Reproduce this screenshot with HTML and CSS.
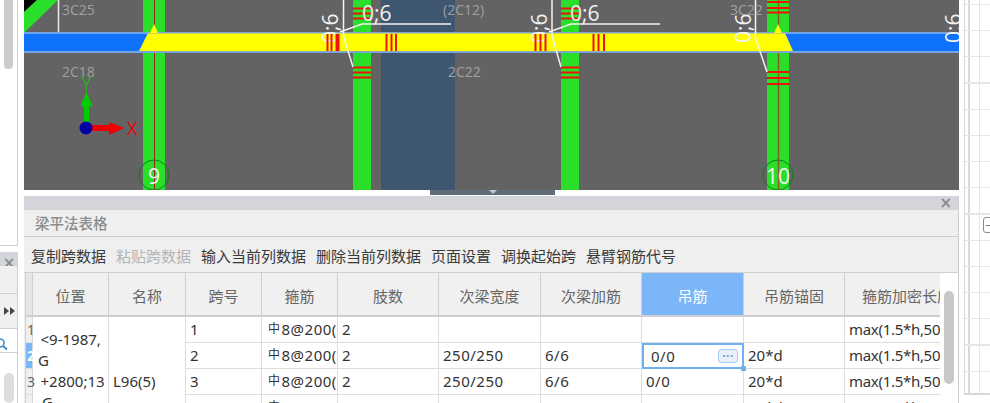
FILE: index.html
```html
<!DOCTYPE html>
<html lang="zh">
<head>
  <meta charset="UTF-8">
  <title>梁平法表格</title>
  <link rel="stylesheet" href="styles.css">
</head>
<body>
  <div class="side">
    <div class="side-top"><div class="side-thumb"></div></div>
    <div class="side-head"><span class="close">×</span></div>
    <div class="side-band"></div>
    <div class="side-band side-arrows">
      <svg width="11" height="8" viewBox="0 0 11 8"><path d="M0 0L5 4L0 8ZM6 0L11 4L6 8Z" fill="#444"/></svg>
    </div>
    <div class="side-search">
      <svg width="8" height="14" viewBox="0 0 8 14"><circle cx="0" cy="6" r="4" fill="none" stroke="#3b8ed0" stroke-width="1.6"/><path d="M3 9l4 3.5" stroke="#3b8ed0" stroke-width="2"/></svg>
    </div>
    <div class="side-list"><div class="side-thumb2"></div></div>
  </div>

  <div class="main">
    <svg class="view" width="935" height="190" viewBox="24 0 935 190">
      <rect x="24" y="0" width="935" height="190" fill="#636363"/>
      <rect x="381" y="0" width="74" height="190" fill="#3e5670"/>
      <path d="M24 0H37L24 12Z" fill="#000"/>
      <path d="M24 12L37 0H58L24 33Z" fill="#2adf2a"/>
      <path d="M58.500 0V32" stroke="#eee" stroke-width="1.500"/>

      <rect x="143" y="0" width="22" height="190" fill="#2adf2a"/>
      <rect x="353" y="0" width="18" height="190" fill="#2adf2a"/>
      <rect x="561" y="0" width="18" height="190" fill="#2adf2a"/>
      <rect x="767" y="0" width="22" height="190" fill="#2adf2a"/>
      <path d="M154.500 0V190" stroke="#96201a"/>
      <path d="M778.500 0V190" stroke="#8f5a22" stroke-width="1.500"/>

      <!-- stirrup ticks on the columns -->
      <path d="M353 8.500H371M353 13.500H371M353 18.500H371M353 67.500H371M353 72.500H371M353 77.500H371" stroke="#f01010" stroke-width="2"/>
      <path d="M561 8.500H579M561 13.500H579M561 18.500H579M561 67.500H579M561 72.500H579M561 77.500H579" stroke="#f01010" stroke-width="2"/>
      <path d="M767 2H789M767 8H789M767 12.500H789M767 72H789M767 78H789M767 84H789" stroke="#f01010" stroke-width="2"/>

      <!-- beam -->
      <rect x="24" y="33" width="935" height="19" fill="#0f72fb"/>
      <path d="M24 33H959M24 52H959" stroke="#72a4e4" stroke-width="2"/>
      <path d="M148 33H785L793 51H139Z" fill="#ff0"/>
      <path d="M148 33H785M154 51.500H785" stroke="#8fa8b8"/>
      <path d="M154 24L158 33H150Z" fill="#ff0"/>
      <path d="M778 24L782 33H774Z" fill="#ff0"/>

      <text class="v-mark" x="362" y="21">0;6</text>
      <text class="v-mark" x="570" y="21">0;6</text>
      <text class="v-mark" transform="translate(338 43) rotate(-90)">0;6</text>
      <text class="v-mark" transform="translate(547 43) rotate(-90)">0;6</text>
      <text class="v-mark" transform="translate(751 43) rotate(-90)">0;6</text>
      <text class="v-mark" transform="translate(961 43) rotate(-90)">0;6</text>

      <path d="M327.500 34V51M331.500 34V51M336.500 34V51M338.500 34V51M386.500 34V51M391.500 34V51M396 34V51M535.500 34V51M540.500 34V51M545.500 34V51M593.500 34V51M598.500 34V51M604 34V51" stroke="#f01010" stroke-width="2"/>

      <!-- leaders -->
      <g fill="none" stroke="#f4f4f4" stroke-width="1.500">
        <path d="M343.500 0V36L353 67"/>
        <path d="M340 32L362 24H451"/>
        <path d="M552 0V36L561 67"/>
        <path d="M549 32L571 24H660"/>
        <path d="M755.500 0V38L767 72"/>
      </g>

      <text class="v-grid" x="62" y="15">3C25</text>
      <text class="v-grid" x="62" y="77">2C18</text>
      <text class="v-grid" x="443" y="15">(2C12)</text>
      <text class="v-grid" x="448" y="77">2C22</text>
      <text class="v-grid" x="730" y="15">3C22</text>

      <!-- axis gizmo -->
      <rect x="84" y="104" width="5" height="22" fill="#0c0"/>
      <path d="M86.500 92L92.500 106H80.500Z" fill="#0c0"/>
      <text class="v-axis-y" x="86.500" y="91">Y</text>
      <rect x="92" y="125" width="20" height="6" fill="#f00000"/>
      <path d="M109 122L124 128L109 135Z" fill="#f00000"/>
      <circle cx="86" cy="128" r="6.500" fill="#0000a4"/>
      <text class="v-axis-x" x="127" y="135">X</text>

      <!-- axis bubbles -->
      <circle cx="154" cy="175" r="15" fill="none" stroke="#0d7d1c"/>
      <text class="v-bubble" x="154" y="184">9</text>
      <circle cx="778" cy="175" r="15" fill="none" stroke="#0d7d1c"/>
      <text class="v-bubble" x="778" y="184">10</text>
    </svg>

    <div class="splitter"><div class="grip"><span class="grip-arrow"></span></div></div>

    <div class="panel">
      <div class="panel-bar"><span class="close">×</span></div>
      <div class="panel-title">梁平法表格</div>
      <div class="toolbar">
        <span>复制跨数据</span>
        <span class="off">粘贴跨数据</span>
        <span>输入当前列数据</span>
        <span>删除当前列数据</span>
        <span>页面设置</span>
        <span>调换起始跨</span>
        <span>悬臂钢筋代号</span>
      </div>
      <div class="grid-wrap">
        <div class="grid-clip">
          <table class="grid">
            <colgroup>
              <col class="c-no"><col class="c-n"><col class="c-n2"><col class="c-n"><col class="c-n">
              <col class="c-w"><col class="c-w2"><col class="c-w"><col class="c-w2"><col class="c-w"><col class="c-last">
            </colgroup>
            <thead>
              <tr>
                <th class="corner"></th><th>位置</th><th>名称</th><th>跨号</th><th>箍筋</th><th>肢数</th>
                <th>次梁宽度</th><th>次梁加筋</th><th class="on">吊筋</th><th>吊筋锚固</th><th>箍筋加密长度</th>
              </tr>
            </thead>
            <tbody>
              <tr>
                <td class="no">1</td>
                <td rowspan="5" class="pos">&thinsp;&lt;9-1987,<br>G<br>&thinsp;+2800;13<br>&nbsp;G<br>&nbsp;</td>
                <td rowspan="5">L96(5)</td>
                <td>1</td><td class="rebar"><i>中</i>8@200(2)</td><td>2</td><td></td><td></td><td></td><td></td><td class="len">max(1.5*h,500)</td>
              </tr>
              <tr>
                <td class="no sel">2</td>
                <td>2</td><td class="rebar"><i>中</i>8@200(2)</td><td>2</td><td class="frac">250/250</td><td class="frac">6/6</td>
                <td class="edit frac">0/0<span class="more">···</span><span class="handle"></span></td>
                <td>20*d</td><td class="len">max(1.5*h,500)</td>
              </tr>
              <tr>
                <td class="no">3</td>
                <td>3</td><td class="rebar"><i>中</i>8@200(2)</td><td>2</td><td class="frac">250/250</td><td class="frac">6/6</td><td class="frac">0/0</td><td>20*d</td><td class="len">max(1.5*h,500)</td>
              </tr>
              <tr>
                <td class="no">4</td>
                <td>4</td><td class="rebar"><i>中</i>8@200(2)</td><td>2</td><td class="frac">250/250</td><td class="frac">6/6</td><td class="frac">0/0</td><td>20*d</td><td class="len">max(1.5*h,500)</td>
              </tr>
              <tr>
                <td class="no">5</td>
                <td>5</td><td class="rebar"><i>中</i>8@200(2)</td><td>2</td><td></td><td></td><td></td><td></td><td class="len">max(1.5*h,500)</td>
              </tr>
            </tbody>
          </table>
        </div>
        <div class="grid-scroll"><div class="grid-thumb"></div></div>
      </div>
    </div>
  </div>

  <div class="right">
    <div class="sheet"><span class="tree-box">−</span></div>
  </div>
</body>
</html>
```

FILE: styles.css
```css
html, body {
  margin: 0;
  height: 403px;
  overflow: hidden;
}

body {
  display: flex;
  background-color: #ffffff;
  font-family: "Noto Sans", "Noto Sans CJK SC", sans-serif;
  font-size: 15px;
  color: #333333;
}

.close {
  color: #8a8a8a;
  font-family: "DejaVu Sans", sans-serif;
  font-size: 15px;
  font-weight: bold;
  line-height: 14px;
}

/* left dock */
.side {
  width: 24px;
  flex: none;
  display: flex;
  flex-direction: column;
}

.side-top {
  width: 18px;
  height: 252px;
  box-sizing: border-box;
  margin-bottom: 6px;
  border-right: 1px solid #cfcfcf;
  border-bottom: 1px solid #cfcfcf;
}

.side-thumb {
  width: 9px;
  height: 69px;
  margin-left: 4px;
  background-color: #cccccc;
  border-radius: 0 0 4px 4px;
}

.side-head {
  width: 18px;
  height: 14px;
  background-color: #d3d5da;
  text-align: center;
}

.side-band {
  width: 18px;
  height: 29px;
  box-sizing: border-box;
  background-color: #f0f0f0;
  border-right: 1px solid #cfcfcf;
  border-bottom: 1px solid #d0d0d0;
}

.side-arrows {
  height: 35px;
  padding: 13px 0 0 4px;
}

.side-arrows svg {
  display: block;
}

.side-search {
  width: 18px;
  height: 24px;
  box-sizing: border-box;
  padding-top: 6px;
  border-right: 1px solid #cfcfcf;
  border-bottom: 1px solid #d0d0d0;
}

.side-list {
  width: 18px;
  flex: 1;
  box-sizing: border-box;
  padding-top: 20px;
  border-right: 1px solid #cfcfcf;
}

.side-thumb2 {
  width: 10px;
  height: 30px;
  margin-left: 4px;
  background-color: #dddddd;
  border-radius: 5px;
}

/* centre */
.main {
  width: 935px;
  flex: none;
  display: flex;
  flex-direction: column;
}

.view {
  display: block;
  flex: none;
}

.v-mark {
  fill: #f2f2f2;
  font-family: "Open Sans", sans-serif;
  font-size: 21px;
}

.v-grid {
  fill: #a0a0a0;
  font-family: "Open Sans", sans-serif;
  font-size: 14px;
}

.v-bubble {
  fill: #f2f2f2;
  font-family: "Open Sans", sans-serif;
  font-size: 21px;
  text-anchor: middle;
}

.v-axis-y {
  fill: #17c017;
  font-family: "Open Sans", sans-serif;
  font-size: 20px;
  font-weight: 300;
  text-anchor: middle;
}

.v-axis-x {
  fill: #f00000;
  font-family: "Open Sans", sans-serif;
  font-size: 18px;
}

.splitter {
  height: 6px;
  display: flex;
  justify-content: center;
}

.grip {
  width: 125px;
  height: 5px;
  margin-left: 2px;
  display: flex;
  justify-content: center;
  background-color: #5f6c7a;
}

.grip-arrow {
  width: 0;
  height: 0;
  border-left: 4px solid transparent;
  border-right: 4px solid transparent;
  border-top: 4px solid #c4c8cc;
}

.panel {
  flex: 1;
  display: flex;
  flex-direction: column;
  min-height: 0;
  background-color: #efefef;
  border-right: 1px solid #cccccc;
}

.panel-bar {
  height: 14px;
  flex: none;
  display: flex;
  justify-content: flex-end;
  padding-right: 6px;
  background-color: #d3d5da;
}

.panel-title {
  height: 27px;
  flex: none;
  box-sizing: border-box;
  padding-left: 11px;
  border-bottom: 1px solid #cccccc;
  color: #8c8c8c;
  font-weight: 500;
  font-size: 14.500px;
  line-height: 27px;
}

.toolbar {
  height: 36px;
  flex: none;
  box-sizing: border-box;
  display: flex;
  gap: 10px;
  padding-left: 7px;
  line-height: 38px;
  color: #3a3a3a;
  border-bottom: 1px solid #d0d0d0;
}

.toolbar .off {
  color: #b5b5b5;
}

.grid-wrap {
  flex: 1;
  display: flex;
  min-height: 0;
  padding-left: 1px;
}

.grid-clip {
  width: 914px;
  flex: none;
  overflow: hidden;
  border-left: 1px solid #d0d0d0;
}

.grid {
  table-layout: fixed;
  width: 944px;
  border-collapse: separate;
  border-spacing: 0;
  background-color: #ffffff;
}

.c-no { width: 7px; }
.c-n { width: 76px; }
.c-n2 { width: 77px; }
.c-w { width: 101px; }
.c-w2 { width: 102px; }
.c-last { width: 125px; }

.grid th {
  height: 44px;
  box-sizing: border-box;
  padding: 3px 0 0;
  background-color: #f0f0f0;
  border-right: 1px solid #cfcfcf;
  border-bottom: 2px solid #cfcfcf;
  color: #666666;
  font-weight: normal;
  white-space: nowrap;
  overflow: hidden;
}

.grid th.on {
  background-color: #7ab6f8;
  color: #ffffff;
}

.grid th.corner {
  background-color: #e6e6e6;
}

.grid td {
  height: 26px;
  box-sizing: border-box;
  padding: 0 0 0 4px;
  border-right: 1px solid #dddddd;
  border-bottom: 1px solid #dddddd;
  color: #333333;
  white-space: nowrap;
  overflow: hidden;
  line-height: 21px;
}

.grid td.no {
  padding: 0 0 0 1px;
  background-color: #f0f0f0;
  color: #666666;
  border-right: 1px solid #d8d8d8;
  font-size: 14px;
  overflow: visible;
}

.grid td.sel {
  background-color: #7ab6f8;
  color: #ffffff;
  font-weight: bold;
}

.grid td.pos {
  padding-left: 5px;
}

.grid td.rebar {
  padding-left: 6px;
  letter-spacing: 0.500px;
}

.grid td.frac {
  letter-spacing: 0.500px;
}

.grid td.len {
  letter-spacing: -0.300px;
}

.rebar i {
  position: relative;
  top: -2px;
  font-style: normal;
  font-size: 12px;
  margin-right: 1px;
}

.grid td.edit {
  position: relative;
  padding-left: 7px;
  border: 2px solid #6fb0f0;
  overflow: visible;
}

.more {
  position: absolute;
  top: 4px;
  right: 4px;
  width: 20px;
  height: 14px;
  box-sizing: border-box;
  border: 1px solid #a6cdf4;
  border-radius: 3px;
  background-color: #e8f1fb;
  color: #6f9fd0;
  font-size: 12px;
  font-weight: bold;
  line-height: 11px;
  text-align: center;
}

.handle {
  position: absolute;
  right: -4px;
  bottom: -4px;
  width: 5px;
  height: 5px;
  background-color: #6fb0f0;
}

.grid-scroll {
  flex: 1;
  background-color: #ffffff;
  padding: 18px 0 0 4px;
}

.grid-thumb {
  width: 10px;
  height: 93px;
  background-color: #c8c8c8;
  border-radius: 5px;
}

/* right sheet */
.right {
  flex: 1;
  padding-left: 5px;
}

.sheet {
  position: relative;
  height: 395px;
  box-sizing: border-box;
  border-left: 1px solid #d8d8d8;
  border-bottom: 2px solid #d8d8d8;
  padding-left: 3px;
  background-color: #ffffff;
  background-image:
    repeating-linear-gradient(to bottom, transparent 0, transparent 25px, #e6e6e6 25px, #e6e6e6 26.200px),
    linear-gradient(to right, #d8d8d8 0, #d8d8d8 2px, transparent 2px, transparent 11px, #e6e6e6 11px, #e6e6e6 12px, transparent 12px);
  background-position: 0 5px, 3px 0;
}

.tree-box {
  position: absolute;
  top: 217px;
  left: 18px;
  width: 14px;
  height: 16px;
  box-sizing: border-box;
  border: 1px solid #8a8a8a;
  border-radius: 3px;
  background-color: #ffffff;
  color: #666666;
  font-size: 11px;
  line-height: 14px;
  padding-left: 1px;
}
```
